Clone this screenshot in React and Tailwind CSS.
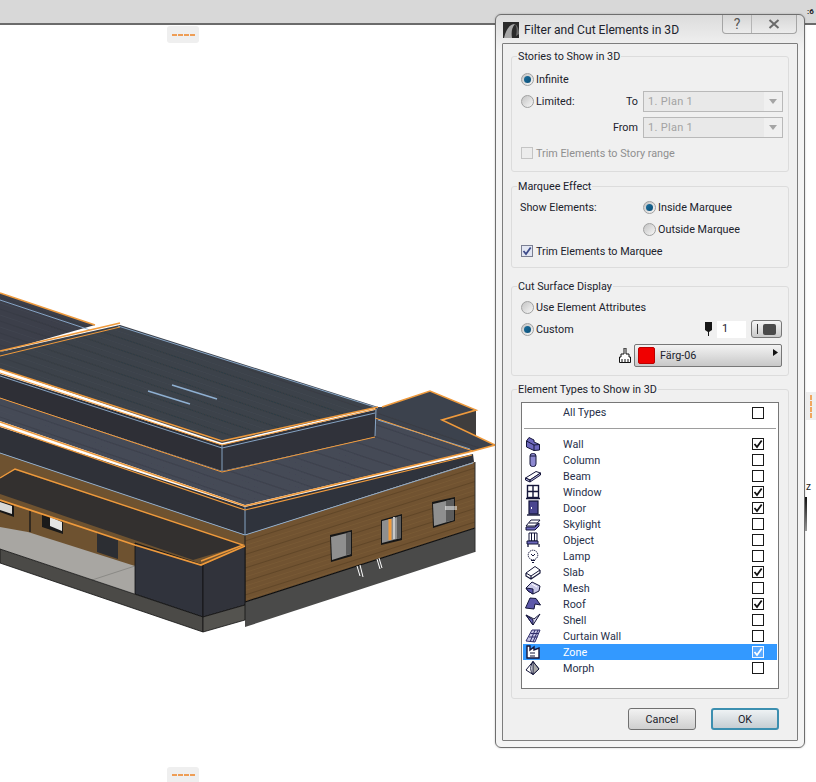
import React from "react";

const font = { fontFamily: 'Roboto,"Liberation Sans",sans-serif' };
const T = "text-[10.8px]";
const L = "translate-y-px";

function Building() {
  const woodRight = [];
  for (let i = 0; i < 15; i++) {
    const y = 541 + i * 4.5;
    woodRight.push(<line key={i} x1="245" y1={y} x2="475" y2={y - 73} stroke={i % 3 === 0 ? "#4f3a20" : "#80613a"} strokeWidth="0.8" opacity="0.6" />);
  }
  const roofLines = [];
  for (let i = 0; i < 40; i++) {
    const y = 285 + i * 6;
    roofLines.push(<line key={i} x1="0" y1={y} x2="500" y2={y + 170} stroke={i % 2 ? "#4b505c" : "#32363f"} strokeWidth="1" opacity="0.35" />);
  }
  return (
    <svg className="absolute left-0 top-0" width="816" height="782" viewBox="0 0 816 782">
      <defs>
        <clipPath id="roofs">
          <polygon points="0,293 95,325 0,352" />
          <polygon points="0,352 120,325 378,407 222,443 0,369" />
          <polygon points="0,398 222,471 375,437 375,418 473,451 245,505 0,421" />
          <polygon points="382,407 430,391 476,410 442,420 495,445 473,451 375,418" />
        </clipPath>
      </defs>
      <polygon points="0,293 95,325 0,352" fill="#3c404b" />
      <polygon points="0,398 222,471 375,437 375,418 473,451 245,505 0,421" fill="#454a56" />
      <polygon points="442,420 476,410 476,436 473,451" fill="#3f3d3d" />
      <polygon points="375,407 382,407 430,391 476,410 442,420 495,445 473,451 375,418" fill="#3e424d" />
      <polygon points="0,352 120,325 378,407 222,443 0,369" fill="#3e424c" />
      <g clipPath="url(#roofs)">{roofLines}</g>
      <polygon points="0,374 222,445 222,471 0,398" fill="#2e2f36" />
      <polygon points="222,445 375,410 375,437 222,471" fill="#30323a" />

      <polygon points="0,427 245,507 245,535 0,453" fill="#2f3138" />
      <polygon points="245,507 473,454 474,462 245,535" fill="#2f333c" />
      <polygon points="0,453 245,535 245,600 0,530" fill="#6e5230" />
      <polygon points="245,535 475,462 475,528 245,602" fill="#715331" />
      {woodRight}
      <polygon points="245,602 475,528 475,552 245,627" fill="#4a4a49" />
      <line x1="245" y1="602" x2="475" y2="528" stroke="#0d0d0d" strokeWidth="1.2" />
      <line x1="245" y1="535" x2="245" y2="602" stroke="#1a1a1a" />
      <line x1="475" y1="462" x2="475" y2="552" stroke="#2f2f2f" />

      <polygon points="0,478 15,470 243,545 193,560 0,494" fill="#33302f" />
      <polygon points="0,527 28,532 135,566 135,594 0,549" fill="#a8a6a2" />
      <line x1="92" y1="580" x2="135" y2="566" stroke="#8b8a86" />
      <polygon points="97,532 118,539 118,559 97,552" fill="#2c2e33" />
      <line x1="30" y1="510" x2="30" y2="532" stroke="#1a1a1a" strokeWidth="1.4" />
      <polygon points="0,500 14,505 14,517 0,512" fill="#161616" />
      <polygon points="0,502 12,506 12,514 0,510" fill="#d8d8d6" />
      <polygon points="42,514 63,521 63,534 42,527" fill="#1a1a1a" />
      <polygon points="50,517 62,522 62,531 50,526" fill="#e5e5e3" />
      <polygon points="135,543 203,565 203,617 135,594" fill="#30333c" stroke="#0f0f0f" strokeWidth="0.8" />
      <polygon points="203,565 245,546 245,605 203,617" fill="#31333b" stroke="#0f0f0f" strokeWidth="0.8" />
      <polygon points="0,549 203,617 203,632 0,563" fill="#4b4a47" stroke="#111" strokeWidth="0.8" />
      <polygon points="203,617 245,605 245,620 203,632" fill="#54534f" stroke="#111" strokeWidth="0.8" />

      {[
        ["330,535 352,530 352,556 331,562", "331,537 351,532 351,554 332,560", "346,533 351,532 351,554 346,555"],
        ["381,520 402,514 402,540 381,545", "382,521 401,516 401,538 382,543", "397,517 401,516 401,538 397,539"],
        ["432,502 455,497 455,521 433,528", "433,504 454,499 454,520 434,526", "446,501 454,499 454,520 446,522"],
      ].map(([a, b, c], i) => (
        <g key={i}>
          <polygon points={a} fill="#161616" />
          <polygon points={b} fill="#8f8f8f" />
          <polygon points={c} fill="#5c5c5c" />
        </g>
      ))}
      <line x1="390" y1="519" x2="390" y2="540" stroke="#f09a3a" strokeWidth="3" />
      <line x1="394" y1="517" x2="394" y2="539" stroke="#c9c9c9" strokeWidth="2" />
      <g stroke="#fff" strokeWidth="1">
        <path d="M445 507H457M445 509H457M357 566L360 576M360 565L363 577M377 559L380 569M379 558L382 568" />
      </g>

      <g fill="none" stroke="#8fb0d2" strokeWidth="0.9">
        <polyline points="118,326 378,408" />
        <polyline points="0,300 90,330" />
        <polyline points="0,376 222,448 375,413" />
        <polyline points="0,453 245,535 473,463" />
        <polyline points="222,445 222,471" />
        <polyline points="245,507 245,535" />
        <polyline points="378,420 470,449" />
        <polyline points="148,391 190,404" strokeWidth="1.4" />
        <polyline points="172,385 217,399" strokeWidth="1.4" />
        <polyline points="376,409 375,436" />
      </g>
      <g fill="none" stroke="#ef9a3c" strokeWidth="1.6">
        <polyline points="0,293 95,325" />
        <polyline points="0,351 120,323" />
        <polyline points="0,356 120,327" strokeWidth="1" />
        <polyline points="0,369 222,441 378,407" />
        <polyline points="0,373 222,445 376,409" strokeWidth="1" />
        <polyline points="0,398 222,472 375,437" strokeWidth="1" />
        <polyline points="0,422 245,506 473,451 495,445 442,420 476,410 430,391 382,407" />
        <polyline points="0,426 245,510 472,455" strokeWidth="1.2" />
        <polyline points="375,418 473,451" strokeWidth="1" />
        <polyline points="0,478 15,469 243,545 201,561" strokeWidth="1.4" />
        <polyline points="0,500 135,545 201,565 245,546" strokeWidth="1.8" />
      </g>
    </svg>
  );
}

function Dashes({ vertical }) {
  const item = vertical ? "w-[2px] h-[5px] bg-[#f0a860]" : "w-[5px] h-[2px] bg-[#ee9d55]";
  return (
    <div className={vertical ? "flex flex-col gap-[1px]" : "flex gap-[1px]"}>
      <span className={item} />
      <span className={item} />
      <span className={item} />
      <span className={item} />
    </div>
  );
}

function Radio({ on }) {
  return (
    <span className="flex h-[13px] w-[13px] shrink-0 items-center justify-center rounded-full border border-[#a0a1a1] bg-gradient-to-br from-[#c4c4c4] to-[#f7f7f7]">
      {on && <span className="h-[7px] w-[7px] rounded-full bg-gradient-to-br from-[#1c6f9c] to-[#0b4f78]" />}
    </span>
  );
}

function Check({ on, light, disabled, blue }) {
  const border = disabled ? "border-[#c4c4c4] bg-[#ececec]" : light ? "border-[#f2f7ff] bg-[#5aa9ff]" : blue ? "border-[#7a7f92] bg-[#e2e6f2]" : "border-[#1a1a1a] bg-white";
  return (
    <span className={"flex h-[12px] w-[12px] shrink-0 items-center justify-center border " + border}>
      {on && (
        <svg width="10" height="10" viewBox="0 0 10 10">
          <path d="M1.5 5L4 8L8.7 1.5" fill="none" stroke={light ? "#fff" : blue ? "#3d4b8a" : "#111"} strokeWidth="1.8" />
        </svg>
      )}
    </span>
  );
}

function Group({ title, className, children }) {
  return (
    <div className={"relative mx-[8px] rounded-[3px] border border-[#dcdcdc] " + className}>
      <span className={"absolute left-[5px] top-[-8px] bg-[#f0f0f0] px-[1px] leading-[16px] " + T}>{title}</span>
      {children}
    </div>
  );
}

function Select({ label }) {
  return (
    <div className="flex h-[22px] items-center justify-end pr-[5px]">
      <span className={"mr-[5px] " + L + " " + T}>{label}</span>
      <div className="flex h-[21px] w-[140px] items-center border border-[#b9b9b9] bg-[#e9e9e9]">
        <span className="flex-1 translate-y-px pl-[4px] text-[11px] tracking-[0.3px] text-[#a3a3a3]">1. Plan 1</span>
        <span className="flex h-full w-[18px] items-center justify-center bg-[#f0f0f0]">
          <svg width="8" height="5" viewBox="0 0 8 5"><path d="M0 0H8L4 5Z" fill="#a5a5a5" /></svg>
        </span>
      </div>
    </div>
  );
}

const P = "#6d68bd";
const S = "#15163a";
const icons = {
  Wall: <><path d="M1.5 5L4 1.5L9 4L9 6L14.5 8.5V14L9 14.5L1.5 11Z" fill={P} stroke={S} /><path d="M1.5 5L9 9V14.5M9 9L14.5 8.5" fill="none" stroke={S} /></>,
  Column: <><rect x="5" y="1.5" width="6" height="13" rx="2.5" fill="#8d89d0" stroke={S} /><path d="M5 4H11" stroke={S} /></>,
  Beam: <><path d="M0.5 10L11 3.5L15.5 5L5 12Z" fill="#fff" stroke={S} /><path d="M0.5 10L5 12L5 14L0.5 12Z M5 12L15.5 5V7L5 14Z" fill="#b9b7e0" stroke={S} /></>,
  Window: <><rect x="2.5" y="1.5" width="11" height="12" fill="#fff" stroke={S} strokeWidth="1.4" /><path d="M8 1.5V13.5M2.5 7.5H13.5M1 14.5H15" stroke={S} strokeWidth="1.4" /></>,
  Door: <><rect x="4" y="1" width="9" height="13" fill="#4a4690" stroke={S} strokeWidth="1.2" /><path d="M2 15H15" stroke={S} strokeWidth="1.4" /><rect x="6" y="7" width="1" height="2" fill="#fff" /></>,
  Skylight: <><path d="M1 10L6 4H15L10 10Z" fill="#fff" stroke={S} /><path d="M4 7H13" fill="none" stroke={S} /><path d="M1 11H10L14 7V10L10 14H1Z" fill={P} stroke={S} /></>,
  Object: <><path d="M4 1H12V9H4Z" fill="#fff" stroke={S} /><path d="M6.5 1V9M9.5 1V9" stroke={S} /><path d="M2 9H13V12H2Z" fill={P} stroke={S} /><path d="M3 12V15M14 12V15" stroke={S} strokeWidth="1.3" /></>,
  Lamp: <><circle cx="8" cy="7" r="4.8" fill="#fff" stroke={S} strokeDasharray="1.4 0.7" /><path d="M6 6L8 8L10 6M6 12.5H10M7 14.5H9" fill="none" stroke={S} /></>,
  Slab: <><path d="M1 9L10 2.5L15 6L6 12Z" fill="#fff" stroke={S} /><path d="M1 9V12L6 15L15 9V6M6 12V15" fill="none" stroke={S} strokeWidth="1.2" /></>,
  Mesh: <><path d="M1 8L7 2L15 6L14 11L8 14L3 11Z" fill="#c9c8e8" stroke={S} /><path d="M1 8L8 9L8 14L3 11Z" fill="#5c58ad" stroke={S} /><path d="M7 4L12 7" stroke="#fff" /></>,
  Roof: <><path d="M0.5 12L5 2L11 2.5L15.5 9L10 8L9 13Z" fill="#5d59aa" stroke={S} /></>,
  Shell: <><path d="M1 3L8 13L15 2L9 7Z" fill="#d8d7ee" stroke={S} /><path d="M1 3L8 8L8 13Z" fill="#6d68bd" stroke={S} /></>,
  "Curtain Wall": <><path d="M1 13L7 2H15L10 14Z" fill="#c8c7e8" stroke="#2f2d6a" /><path d="M4 9H12.5M5.5 5.5H14M5 14L10 2M8 14L13 2" stroke="#2f2d6a" fill="none" /></>,
  Zone: <><path d="M2 2H5V6L9 3V6L14 4V14H2Z" fill="#fff" stroke={S} strokeWidth="1.4" /><path d="M5 9H10M5 12H10" stroke={S} strokeWidth="1.2" /></>,
  Morph: <><path d="M1 10L8 1.5L14 9L8 14.5Z" fill="#fff" stroke={S} /><path d="M8 1.5C5 6 5 11 8 14.5" fill="none" stroke={S} /><path d="M8 1.5L14 9L8 14.5Z" fill="#a9a9a9" stroke={S} /></>,
};

const types = [
  ["Wall", true],
  ["Column", false],
  ["Beam", false],
  ["Window", true],
  ["Door", true],
  ["Skylight", false],
  ["Object", false],
  ["Lamp", false],
  ["Slab", true],
  ["Mesh", false],
  ["Roof", true],
  ["Shell", false],
  ["Curtain Wall", false],
  ["Zone", true, true],
  ["Morph", false],
];

function TypeRow({ name, on, selected }) {
  return (
    <div className={"flex h-[16px] items-center " + (selected ? "bg-[#3399ff] text-white" : "")}>
      <svg className="ml-[2px] shrink-0" width="16" height="16" viewBox="0 0 16 16">{icons[name]}</svg>
      <span className={"ml-[22px] flex-1 translate-y-px leading-[16px] " + T}>{name}</span>
      <span className="mr-[13px]"><Check on={on} light={selected} /></span>
    </div>
  );
}

function Dialog() {
  return (
    <div className="absolute left-[495px] top-[14px] flex h-[734px] w-[310px] flex-col rounded-[6px] border border-[#6e6e6e] bg-gradient-to-b from-[#dcdcdc] via-[#f4f4f4] via-[5%] to-[#f4f4f4] text-[#20222c] shadow-[0_0_2px_rgba(0,0,0,0.25)]" style={font}>
      <div className="relative flex h-[28px] shrink-0 items-center pl-[7px]">
        <svg width="16" height="16" viewBox="0 0 16 16" className="mt-[2px]">
          <rect width="16" height="16" fill="#2b2b2b" />
          <path d="M1 16C3 7 7 2 12 2C9 5 8 10 9 16Z" fill="#a8a8a8" />
          <path d="M12 2C15 4 16 8 16 12L13 14C14 9 14 5 12 2Z" fill="#6a6a6a" />
        </svg>
        <span className="ml-[5px] mt-[2px] text-[12.1px]">Filter and Cut Elements in 3D</span>
        <div className="absolute right-[7px] top-0 flex h-[19px] w-[75px] rounded-b-[4px] border border-t-0 border-[#a5a5a5] bg-gradient-to-b from-[#d6d6d6] to-[#ececec]">
          <span className="flex w-[29px] items-center justify-center border-r border-[#b5b5b5] text-[14px] leading-none text-[#555]">?</span>
          <span className="flex flex-1 items-center justify-center">
            <svg width="12" height="10" viewBox="0 0 12 10"><path d="M1.5 1L10.5 9M10.5 1L1.5 9" stroke="#6a6a6a" strokeWidth="2" /></svg>
          </span>
        </div>
      </div>
      <div className="mx-[6px] flex h-[698px] flex-col rounded-[1px] border border-[#7d7d7d] bg-[#f0f0f0] pt-[12px]">
        <Group title="Stories to Show in 3D" className="h-[116px] pt-[11px]">
          <div className={"flex h-[22px] items-center gap-[2px] pl-[9px] " + T}><Radio on /><span className={L}>Infinite</span></div>
          <div className="relative h-[22px]">
            <div className={"absolute left-[9px] top-0 flex h-[22px] items-center gap-[2px] " + T}><Radio /><span className={L}>Limited:</span></div>
            <Select label="To" />
          </div>
          <div className="mt-[4px]"><Select label="From" /></div>
          <div className={"mt-[4px] flex h-[22px] items-center gap-[3px] pl-[9px] text-[#8f8f8f] " + T}><Check disabled /><span className={L}>Trim Elements to Story range</span></div>
        </Group>
        <Group title="Marquee Effect" className="mt-[14px] h-[82px] pt-[9px]">
          <div className={"flex h-[22px] items-center pl-[8px] " + T}>
            <span className={"w-[123px] " + L}>Show Elements:</span><Radio on /><span className={"ml-[2px] " + L}>Inside Marquee</span>
          </div>
          <div className={"flex h-[22px] items-center pl-[131px] " + T}><Radio /><span className={"ml-[2px] " + L}>Outside Marquee</span></div>
          <div className={"flex h-[22px] items-center gap-[3px] pl-[9px] " + T}><Check on blue /><span className={L}>Trim Elements to Marquee</span></div>
        </Group>
        <Group title="Cut Surface Display" className="mt-[18px] h-[90px] pt-[9px]">
          <div className={"flex h-[22px] items-center gap-[2px] pl-[9px] " + T}><Radio /><span className={L}>Use Element Attributes</span></div>
          <div className={"flex h-[22px] items-center pl-[9px] pr-[6px] " + T}>
            <Radio on /><span className={"ml-[2px] flex-1 " + L}>Custom</span>
            <svg width="9" height="14" viewBox="0 0 9 14"><path d="M1 0H8V8L5 10V14H4V10L1 8Z" fill="#161616" /></svg>
            <span className="ml-[4px] flex h-[17px] w-[29px] items-center bg-white pl-[5px] text-[11px]">1</span>
            <span className="ml-[5px] flex h-[18px] w-[31px] items-center gap-[5px] rounded-[3px] border border-[#777] bg-gradient-to-b from-[#f5f5f5] to-[#c9c9c9] pl-[5px]">
              <span className="h-[10px] w-[1px] bg-[#333]" />
              <span className="h-[11px] w-[13px] rounded-[2px] bg-[#4a4a4a]" />
            </span>
          </div>
          <div className="mt-[4px] flex h-[23px] items-center justify-end pr-[6px]">
            <svg width="12" height="15" viewBox="0 0 12 15" className="mr-[3px]">
              <path d="M5 0H7V6H10V9H11.5V14.5H0.5V9H2V6H5Z" fill="#fff" stroke="#111" />
              <path d="M3 11V14M6 11V14M9 11V14" stroke="#111" />
            </svg>
            <div className="flex h-[23px] w-[148px] items-center rounded-[2px] border border-[#777] bg-gradient-to-b from-[#f3f3f3] to-[#c8c8c8] pl-[3px]">
              <span className="h-[17px] w-[17px] rounded-[2px] border border-[#b00] bg-[#f00000]" />
              <span className={"ml-[5px] flex-1 " + L + " " + T}>Färg-06</span>
              <svg className="mb-[6px] mr-[3px]" width="5" height="7" viewBox="0 0 5 7"><path d="M0 0L5 3.5L0 7Z" fill="#111" /></svg>
            </div>
          </div>
        </Group>
        <Group title="Element Types to Show in 3D" className="mt-[13px] h-[310px] pt-[12px]">
          <div className="mx-[9px] h-[287px] border border-[#777] bg-white text-[#27304a]">
            <div className="flex h-[20px] items-center">
              <span className={"ml-[41px] flex-1 " + T}>All Types</span>
              <span className="mr-[14px]"><Check /></span>
            </div>
            <div className="mx-[2px] mt-[5px] h-px bg-[#9d9d9d]" />
            <div className="px-[1px] pt-[7px]">
              {types.map(([name, on, selected]) => (
                <TypeRow key={name} name={name} on={on} selected={selected} />
              ))}
            </div>
          </div>
        </Group>
        <div className="flex items-start justify-end gap-[15px] pr-[18px] pt-[9px]">
          <button className={"h-[22px] w-[68px] rounded-[3px] border border-[#707070] bg-gradient-to-b from-[#f2f2f2] to-[#cfcfcf] pt-[2px] " + T}>Cancel</button>
          <button className={"h-[22px] w-[68px] rounded-[3px] border-2 border-[#3c8fb0] bg-gradient-to-b from-[#eef2f4] to-[#c6ced3] pt-[2px] " + T}>OK</button>
        </div>
      </div>
    </div>
  );
}

export default function App() {
  return (
    <div className="relative h-[782px] w-[816px] overflow-hidden bg-white">
      <div className="h-[25px] border-b-2 border-[#6b6b6b] bg-[#d8d8d8]" />
      <Building />
      <div className="absolute left-[167px] top-[26px] flex h-[17px] w-[32px] items-center justify-center rounded-[3px] bg-[#efefef]"><Dashes /></div>
      <div className="absolute bottom-0 left-[167px] flex h-[15px] w-[32px] items-center justify-center rounded-t-[3px] bg-[#efefef]"><Dashes /></div>
      <div className="absolute left-[806px] top-[392px] flex h-[28px] w-[10px] items-center justify-center bg-[#efefef]"><Dashes vertical /></div>
      <Dialog />
      <div className="absolute left-[805px] top-[497px] h-[34px] w-[2px] bg-gradient-to-b from-[#111] to-[#999]" />
      <span className="absolute left-[806px] top-[480px] text-[10px] leading-[14px] text-[#222]" style={font}>z</span>
      <span className="absolute left-[807px] top-[7px] text-[8px] font-bold leading-[10px] text-[#222]" style={font}>:6</span>
    </div>
  );
}
